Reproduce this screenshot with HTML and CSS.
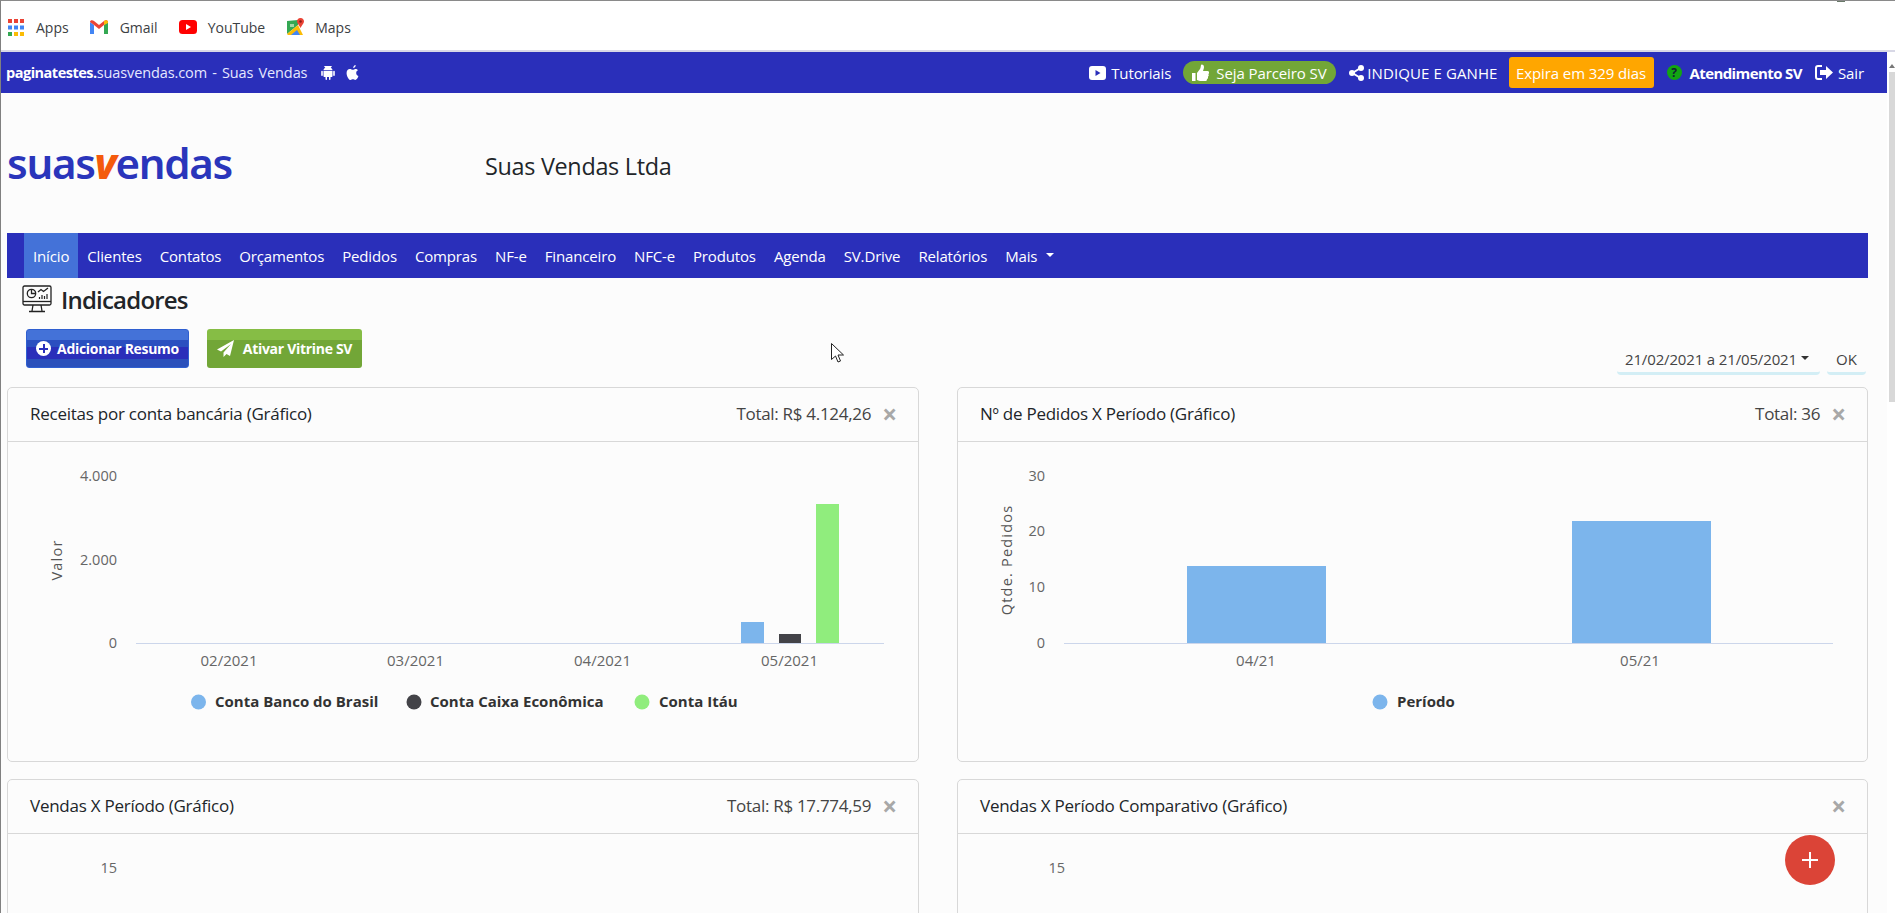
FILE: index.html
```html
<!DOCTYPE html>
<html lang="pt-BR">
<head>
<meta charset="utf-8">
<title>Suas Vendas - Indicadores</title>
<link rel="stylesheet" href="styles.css">
</head>
<body>
<div class="bookmarks">
  <a class="bm bm-apps"><svg width="16" height="17" viewBox="0 0 16 17"><rect width="4" height="4" fill="#ea4335"/><rect x="6" width="4" height="4" fill="#ea4335"/><rect x="12" width="4" height="4" fill="#ea4335"/><rect y="6.500" width="4" height="4" fill="#4285f4"/><rect x="6" y="6.500" width="4" height="4" fill="#4285f4"/><rect x="12" y="6.500" width="4" height="4" fill="#4285f4"/><rect y="13" width="4" height="4" fill="#34a853"/><rect x="6" y="13" width="4" height="4" fill="#fbbc05"/><rect x="12" y="13" width="4" height="4" fill="#fbbc05"/></svg>Apps</a>
  <a class="bm bm-gmail"><svg width="18" height="14" viewBox="0 0 18 14"><path d="M0 2v12h4V5z" fill="#4285f4"/><path d="M18 2v12h-4V5z" fill="#34a853"/><path d="M0 2c0-2 2.500-2.500 4-1l5 4 5-4c1.500-1.500 4-1 4 1l-4 3-5 4-5-4z" fill="#ea4335"/><path d="M14 1c1.500-1.500 4-1 4 1v1l-4 2z" fill="#fbbc05"/></svg>Gmail</a>
  <a class="bm bm-yt"><svg width="18" height="14" viewBox="0 0 18 14"><rect width="18" height="14" rx="3.500" fill="#f00"/><path d="M7 4l5 3-5 3z" fill="#fff"/></svg>YouTube</a>
  <a class="bm bm-maps"><svg width="18" height="18" viewBox="0 0 18 18"><path d="M0 3l11-1v5L0 16z" fill="#34a853"/><path d="M0 16L11 7l5 10H1z" fill="#fbbc05"/><path d="M4 17l6-5 3 5z" fill="#4285f4"/><path d="M3 6h4v3H3z" fill="#a5d6a7"/><path d="M13.500 0C11 0 10 2 10 3.500c0 2 2.500 4 3.500 6.500 1-2.500 3.500-4.500 3.500-6.500C17 2 16 0 13.500 0z" fill="#ea4335"/><circle cx="13.500" cy="3.500" r="1.300" fill="#8c1d18"/></svg>Maps</a>
  <span class="profile-dot"></span>
</div>
<div class="viewport">
  <main class="content">
    <header class="topbar">
      <div class="topbar-left">
        <span class="domain"><b>paginatestes.</b>suasvendas.com - Suas Vendas</span>
        <svg class="ico-android" width="14" height="15" viewBox="0 0 14 15"><path d="M3 1l1 1.500C5.500 1.800 8.500 1.800 10 2.500L11 1M2.500 5C2.500 3.500 4.500 2 7 2s4.500 1.500 4.500 3zM2.500 5.800h9V11c0 .6-.4 1-1 1h-1v2.200c0 1-1.500 1-1.500 0V12H6v2.200c0 1-1.500 1-1.500 0V12h-1c-.6 0-1-.4-1-1zM.2 6.500c0-1 1.600-1 1.600 0v3.800c0 1-1.600 1-1.600 0zM12.200 6.500c0-1 1.600-1 1.600 0v3.800c0 1-1.600 1-1.600 0z" fill="#fff"/></svg>
        <svg class="ico-apple" width="13" height="15" viewBox="0 0 15 19"><path d="M12 5c-2 0-3 1-4 1S5.500 5 4 5C2 5 0 7 0 10c0 4 3 9 5 9 1.200 0 1.800-.8 3-.8s1.800.8 3 .8c1.600 0 3.200-2.700 4-5-2-.8-2.800-2.500-2.800-4 0-1.500.9-2.700 2.200-3.400C13.600 5.500 12.800 5 12 5zM11.500 0C9.800.2 8.300 1.800 8.400 3.800 10.200 3.800 11.700 2 11.500 0z" fill="#fff"/></svg>
      </div>
      <nav class="topbar-right">
        <a class="tb tb-tut"><svg width="17" height="14" viewBox="0 0 17 14"><rect width="17" height="14" rx="3" fill="#fff"/><path d="M6.500 4l5 3-5 3z" fill="#2a2fba"/></svg>Tutoriais</a>
        <a class="tb tb-pill"><svg width="17" height="18" viewBox="0 0 17 18"><path d="M0 9h3.500v8H0zM5 9l3-4c.6-1 .8-2.500 1-4 0-1 3-1 3 2 0 1.500-.6 2.800-1 4h4.500c2 0 2 2.300.8 3 .8 1 .6 2.300-.4 2.800.4 1 0 2.200-1 2.500.2 1.400-.8 1.700-2 1.700H8c-1.500 0-2-1-3-1z" fill="#fff"/></svg>Seja Parceiro SV</a>
        <a class="tb tb-share"><svg width="15" height="16" viewBox="0 0 15 16"><path d="M11.500 3L3.500 8l8 5" stroke="#fff" stroke-width="2" fill="none"/><circle cx="12" cy="3" r="3" fill="#fff"/><circle cx="3" cy="8" r="3" fill="#fff"/><circle cx="12" cy="13" r="3" fill="#fff"/></svg>INDIQUE E GANHE</a>
        <a class="tb tb-expira">Expira em 329 dias</a>
        <a class="tb tb-help"><span class="q-circle">?</span><b>Atendimento SV</b></a>
        <a class="tb tb-sair"><svg width="18" height="15" viewBox="0 0 18 15"><path d="M7 1H3C1.500 1 1 2 1 3v9c0 1 .5 2 2 2h4" stroke="#fff" stroke-width="2" fill="none"/><path d="M5 5h6V1l7 6.500L11 14v-4H5z" fill="#fff"/></svg>Sair</a>
      </nav>
    </header>

    <section class="brand">
      <div class="logo">suas<i>v</i>endas</div>
      <div class="company">Suas Vendas Ltda</div>
    </section>

    <nav class="mainnav">
      <a class="active">Início</a><a>Clientes</a><a>Contatos</a><a>Orçamentos</a><a>Pedidos</a><a>Compras</a><a>NF-e</a><a>Financeiro</a><a>NFC-e</a><a>Produtos</a><a>Agenda</a><a>SV.Drive</a><a>Relatórios</a><a>Mais<span class="caret"></span></a>
    </nav>

    <div class="title-row">
      <svg width="30" height="28" viewBox="0 0 30 28" fill="none" stroke="#222" stroke-width="1.300"><rect x="1" y="1" width="28" height="19" rx="1.500"/><path d="M1 16.500h28" /><path d="M11 20l-1 6M19 20l1 6M7 26.500h16"/><circle cx="9.500" cy="8.500" r="4.200"/><path d="M9.500 4.500v4h4"/><path d="M16 7l3-2.500 2.500 2L26 3"/><path d="M17.500 14v-2M20 14v-4M22.500 14v-3M25 14v-5" stroke-width="1.200"/></svg>
      <h1>Indicadores</h1>
    </div>

    <div class="actions">
      <a class="btn btn-blue"><span class="plus-circle"></span>Adicionar Resumo</a>
      <a class="btn btn-green"><svg width="17" height="17" viewBox="0 0 17 17"><path d="M17 0L0 9.500l4 2L14 4 6.500 12.500V17l3-3 3.500 2z" fill="#fff"/></svg>Ativar Vitrine SV</a>
      <div class="date-tools">
        <a class="date-btn">21/02/2021 a 21/05/2021<span class="caret caret-dark"></span></a>
        <a class="ok-btn">OK</a>
      </div>
    </div>

    <div class="cards">
      <article class="card">
        <div class="card-head"><h2>Receitas por conta bancária (Gráfico)</h2><span class="total">Total: R$ 4.124,26</span><span class="close">×</span></div>
        <svg class="chart" width="910" height="320" viewBox="8 442 910 320">
          <path class="axis" d="M136 643.500H884"/>
          <rect x="741" y="622" width="23" height="21" fill="#7cb5ec"/>
          <rect x="779" y="634" width="22" height="9" fill="#434348"/>
          <rect x="816" y="504" width="23" height="139" fill="#90ed7d"/>
          <text class="ylab" x="117" y="481">4.000</text>
          <text class="ylab" x="117" y="565">2.000</text>
          <text class="ylab" x="117" y="648">0</text>
          <text class="xlab" x="229" y="666">02/2021</text>
          <text class="xlab" x="415.500" y="666">03/2021</text>
          <text class="xlab" x="602.500" y="666">04/2021</text>
          <text class="xlab" x="789.500" y="666">05/2021</text>
          <text class="ytitle" transform="translate(62 560) rotate(-90)">Valor</text>
          <circle cx="198.500" cy="702" r="7.500" fill="#7cb5ec"/><text class="leg" x="215" y="707">Conta Banco do Brasil</text>
          <circle cx="414" cy="702" r="7.500" fill="#434348"/><text class="leg" x="430" y="707">Conta Caixa Econômica</text>
          <circle cx="642" cy="702" r="7.500" fill="#90ed7d"/><text class="leg" x="659" y="707">Conta Itáu</text>
        </svg>
      </article>
      <article class="card">
        <div class="card-head"><h2>Nº de Pedidos X Período (Gráfico)</h2><span class="total">Total: 36</span><span class="close">×</span></div>
        <svg class="chart" width="909" height="320" viewBox="958 442 909 320">
          <path class="axis" d="M1064 643.500H1833"/>
          <rect x="1187" y="566" width="139" height="77" fill="#7cb5ec"/>
          <rect x="1572" y="521" width="139" height="122" fill="#7cb5ec"/>
          <text class="ylab" x="1045" y="481">30</text>
          <text class="ylab" x="1045" y="536">20</text>
          <text class="ylab" x="1045" y="592">10</text>
          <text class="ylab" x="1045" y="648">0</text>
          <text class="xlab" x="1256" y="666">04/21</text>
          <text class="xlab" x="1640" y="666">05/21</text>
          <text class="ytitle" transform="translate(1012 560) rotate(-90)">Qtde. Pedidos</text>
          <circle cx="1380" cy="702" r="7.500" fill="#7cb5ec"/><text class="leg" x="1397" y="707">Período</text>
        </svg>
      </article>
      <article class="card">
        <div class="card-head"><h2>Vendas X Período (Gráfico)</h2><span class="total">Total: R$ 17.774,59</span><span class="close">×</span></div>
        <svg class="chart" width="910" height="320" viewBox="8 835 910 320"><text class="ylab" x="117" y="874">15</text></svg>
      </article>
      <article class="card">
        <div class="card-head"><h2>Vendas X Período Comparativo (Gráfico)</h2><span class="close">×</span></div>
        <svg class="chart" width="909" height="320" viewBox="958 835 909 320"><text class="ylab" x="1065" y="874">15</text></svg>
      </article>
    </div>
  </main>
  <aside class="scrollbar"><span class="sb-arrow"></span><span class="sb-thumb"></span></aside>
</div>

<svg class="cursor" width="13" height="20" viewBox="0 0 13 20"><path d="M.5.500v16l4-3.500 2.500 6 2.500-1-2.500-6h5.500z" fill="#fff" stroke="#222" stroke-width="1"/></svg>
<a class="fab"><svg width="18" height="18" viewBox="0 0 18 18"><path d="M9 1v16M1 9h16" stroke="#fff" stroke-width="2"/></svg></a>
</body>
</html>
```
FILE: styles.css
```css
* { box-sizing: border-box; }
html, body { margin: 0; height: 100%; }
body {
  width: 1895px;
  height: 913px;
  overflow: hidden;
  position: relative;
  background: #fcfcfc;
  border-top: 1px solid #8a8a8a;
  border-left: 1px solid #808080;
  font-family: "Open Sans", "Liberation Sans", sans-serif;
  font-size: 15px;
  color: #212529;
}
a { color: inherit; text-decoration: none; }

.bookmarks {
  height: 51px;
  background: #fff;
  border-bottom: 2px solid #d8d8e6;
  display: flex;
  align-items: center;
  padding: 3px 0 0 7px;
  position: relative;
  font-size: 14px;
  color: #3c4043;
}
.bm { display: flex; align-items: center; gap: 12px; }
.bm-gmail { margin-left: 21px; }
.bm-yt { margin-left: 21px; gap: 11px; }
.bm-maps { margin-left: 22px; gap: 10px; }
.profile-dot {
  position: absolute; left: 1836px; top: -1px;
  width: 8px; height: 2px; background: #6a7a6a;
}

.viewport { display: flex; height: 861px; }
.content { width: 1886px; flex: none; overflow: hidden; }
.scrollbar { width: 8px; flex: none; display: flex; flex-direction: column; align-items: flex-end; padding-top: 12px; background: #fff; }
.sb-arrow { width: 0; height: 0; border: 3px solid transparent; border-bottom: 4px solid #777; border-top: 0; margin: 0 0 4px; }
.sb-thumb { width: 6px; height: 330px; background: #d8d8d8; }

.topbar {
  height: 41px;
  background: #2a2fba;
  color: #fff;
  display: flex;
  justify-content: space-between;
  align-items: center;
  padding: 0 23px 0 5px;
}
.topbar-left { display: flex; align-items: center; }
.domain { font-size: 14.500px; letter-spacing: -0.1px; word-spacing: 1.500px; color: #e6e8ff; }
.domain b { color: #fff; letter-spacing: -0.5px; }
.ico-android { margin-left: 14px; }
.ico-apple { margin-left: 11px; }
.topbar-right { display: flex; align-items: center; }
.tb { display: flex; align-items: center; letter-spacing: -0.1px; }
.tb-tut { gap: 5px; }
.tb-pill { margin-left: 12px; height: 23px; width: 153px; padding-left: 9px; gap: 7px; background: #72a637; border-radius: 12px; }
.tb-share { margin-left: 13px; gap: 3px; letter-spacing: 0.1px; }
.tb-expira { margin-left: 11px; height: 31px; width: 145px; justify-content: center; background: #ffa600; border-radius: 3px; }
.tb-help { margin-left: 13px; gap: 8px; }
.tb-help b { letter-spacing: -0.6px; }
.q-circle { width: 15px; height: 15px; border-radius: 50%; background: #12a512; color: #123; font-size: 12px; font-weight: 700; display: flex; align-items: center; justify-content: center; }
.tb-sair { margin-left: 13px; gap: 5px; }

.brand { height: 140px; display: flex; align-items: center; padding-left: 6px; }
.logo {
  width: 478px;
  font-family: "Noto Sans", "Open Sans", sans-serif;
  font-weight: 600;
  font-size: 42px;
  letter-spacing: -1.300px;
  color: #2a35bb;
  line-height: 1;
  margin-top: -1px;
}
.logo i { color: #f45a0c; font-weight: 800; }
.company { font-size: 23.400px; letter-spacing: -0.300px; color: #212529; margin-top: 5px; }

.mainnav {
  margin-left: 6px;
  width: 1861px;
  height: 45px;
  padding-left: 17px;
  background: #2a2fba;
  color: #fff;
  display: flex;
}
.mainnav a { display: flex; align-items: center; padding: 0 9px; letter-spacing: -0.150px; }
.mainnav a.active { background: #4472d8; }
.caret {
  width: 0; height: 0; margin-left: 9px; margin-bottom: 2px;
  border-left: 4.500px solid transparent;
  border-right: 4.500px solid transparent;
  border-top: 4.500px solid #fff;
}
.caret-dark { border-top-color: #333; margin-left: 4px; }

.title-row { height: 46px; padding: 7px 0 0 21px; display: flex; align-items: flex-start; gap: 9px; }
.title-row h1 { margin: -3px 0 0; font-size: 24px; font-weight: 600; letter-spacing: -0.8px; line-height: 36px; }

.actions { height: 64px; padding: 5px 21px 0 25px; display: flex; align-items: flex-start; }
.btn {
  height: 39px;
  display: flex; align-items: center; justify-content: center;
  color: #fff; font-weight: 700; font-size: 14px;
  letter-spacing: -0.3px;
  border-radius: 3px;
}
.btn-blue {
  width: 163px; gap: 6px;
  background: linear-gradient(#4472d8 0 10px, #2a4fc0 10px 17px, #2a2fba 17px 29px, #2b50bb 29px);
  border: 1px solid #2f5fd0;
}
.btn-green {
  width: 155px; margin-left: 18px; gap: 9px;
  background: linear-gradient(#86bd45 0 11px, #72a637 11px);
}
.plus-circle { width: 15px; height: 15px; border-radius: 50%; position: relative; background:
  linear-gradient(#2a2fba,#2a2fba) center/9px 2px no-repeat,
  linear-gradient(#2a2fba,#2a2fba) center/2px 9px no-repeat,
  #fff; }
.date-tools { margin-left: auto; padding-top: 16px; display: flex; gap: 7px; color: #444; font-size: 15px; }
.date-btn { width: 203px; height: 30px; padding-left: 8px; display: flex; align-items: center; border-bottom: 3px solid #d3eef5; border-radius: 0 0 4px 4px; letter-spacing: -0.15px; }
.ok-btn { width: 39px; height: 30px; display: flex; align-items: center; justify-content: center; border-bottom: 3px solid #d3eef5; border-radius: 0 0 4px 4px; }

.cards {
  margin-left: 6px;
  display: grid;
  grid-template-columns: 912px 911px;
  column-gap: 38px;
  row-gap: 17px;
  margin-top: -1px;
}
.card {
  height: 375px;
  background: #fcfcfc;
  border: 1px solid #d8d8d8;
  border-radius: 5px;
  overflow: hidden;
}
.card-head {
  height: 54px;
  padding: 0 21px 2px 22px;
  border-bottom: 1px solid #d8d8d8;
  display: flex;
  align-items: center;
}
.card-head h2 { margin: 0; font-size: 17px; font-weight: 500; letter-spacing: -0.25px; flex: 1; color: #212529; }
.total { font-size: 17px; color: #444; letter-spacing: -0.3px; }
.close { margin-left: 11px; font-size: 26px; font-weight: 700; color: #a8a8a8; line-height: 1; }
.chart { display: block; font-family: "Open Sans", sans-serif; }
.axis { stroke: #ccd6eb; stroke-width: 1; fill: none; }
.ylab { text-anchor: end; font-size: 14.500px; fill: #666; }
.xlab { text-anchor: middle; font-size: 15px; fill: #666; }
.ytitle { text-anchor: middle; font-size: 14.500px; letter-spacing: 1.200px; fill: #555; }
.leg { font-size: 15px; font-weight: 700; fill: #333; }

.cursor { position: absolute; left: 830px; top: 342px; }
.fab {
  position: absolute; left: 1784px; top: 834px;
  width: 50px; height: 50px; border-radius: 50%;
  background: #db4437;
  display: flex; align-items: center; justify-content: center;
}
```
